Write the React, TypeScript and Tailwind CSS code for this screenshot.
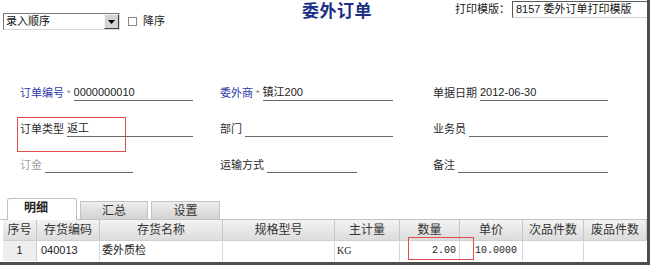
import React from 'react';

const FONT = "'Liberation Sans','Noto Sans CJK SC',sans-serif";

const cols = [
  { w: 34, label: '序号' },
  { w: 63, label: '存货编码' },
  { w: 123, label: '存货名称' },
  { w: 112, label: '规格型号' },
  { w: 65, label: '主计量' },
  { w: 60, label: '数量' },
  { w: 63, label: '单价' },
  { w: 61, label: '次品件数' },
  { w: 63, label: '废品件数' },
];

function Field({
  label,
  value,
  width,
  blue,
  muted,
  star,
}: {
  label: string;
  value?: string;
  width: number;
  blue?: boolean;
  muted?: boolean;
  star?: boolean;
}) {
  const labelColor = blue ? 'text-[#2d3aa6]' : muted ? 'text-[#a0a0a0]' : 'text-[#2a2a2a]';
  return (
    <div className="flex items-end h-[17px]" style={{ width }}>
      <span className={`text-[11px] leading-[16px] whitespace-nowrap ${labelColor}`}>{label}</span>
      {star && <span className="text-[9px] leading-[12px] text-[#777] ml-[3px] self-center">*</span>}
      <div className="flex-1 ml-[3px] h-[17px] border-b border-[#6a6a6a] text-[11px] leading-[16px] text-[#222] whitespace-nowrap overflow-hidden">
        {value}
      </div>
    </div>
  );
}

export default function App() {
  return (
    <div className="w-[652px] h-[267px] bg-white overflow-hidden" style={{ fontFamily: FONT }}>
      <div className="w-[650px] h-[265px] border-r-[3px] border-b-[3px] border-[#4e4e4e] flex flex-col">
        {/* top bar */}
        <div className="h-[32px] flex items-start">
          <div className="w-[299px] pl-[3px] pt-[13px] flex items-center">
            <div className="w-[117px] h-[17px] flex border border-t-[#7a7a7a] border-l-[#7a7a7a] border-r-[#d8d8d8] border-b-[#d8d8d8] bg-white">
              <span className="flex-1 text-[11px] leading-[15px] pl-[2px] text-[#111]">录入顺序</span>
              <div className="w-[15px] h-[15px] bg-[#d6d3ce] border border-t-[#f4f4f4] border-l-[#f4f4f4] border-r-[#404040] border-b-[#404040] flex items-center justify-center">
                <svg width="7" height="4" viewBox="0 0 7 4">
                  <path d="M0 0h7L3.5 4z" fill="#000" />
                </svg>
              </div>
            </div>
            <div className="ml-[8px] w-[9px] h-[9px] border border-[#8a8a8a] bg-white" />
            <span className="ml-[6px] text-[11px] leading-[15px] text-[#222]">降序</span>
          </div>
          <div className="w-[156px] pt-[1px] pl-[3px] text-[17px] leading-[22px] font-bold text-[#1c2f86] tracking-[0.5px]">
            委外订单
          </div>
          <span className="w-[57px] pt-[2px] text-[11px] leading-[14px] text-[#222] whitespace-nowrap">打印模版：</span>
          <div className="flex-1 mt-[1px] h-[17px] border border-t-[#5a5a5a] border-l-[#5a5a5a] border-r-0 border-b-[#d0d0d0] text-[11px] leading-[15px] pl-[3px] text-[#111] whitespace-nowrap">
            8157 委外订单打印模版
          </div>
        </div>

        {/* form */}
        <div className="mt-[52px] pl-[20px] flex flex-col">
          <div className="h-[36px] grid grid-cols-[200px_213px_1fr]">
            <Field label="订单编号" value="0000000010" width={173} blue star />
            <Field label="委外商" value="镇江200" width={173} blue star />
            <Field label="单据日期" value="2012-06-30" width={175} />
          </div>
          <div className="h-[36px] grid grid-cols-[200px_213px_1fr]">
            <div className="relative">
              <Field label="订单类型" value="返工" width={173} />
              <div className="absolute z-10 left-[-3px] top-[-3px] w-[109px] h-[35px] border border-[#e04c4c] pointer-events-none" />
            </div>
            <Field label="部门" width={173} />
            <Field label="业务员" width={175} />
          </div>
          <div className="h-[36px] grid grid-cols-[200px_213px_1fr]">
            <Field label="订金" width={113} muted />
            <Field label="运输方式" width={137} />
            <Field label="备注" width={175} />
          </div>
        </div>

        {/* tabs */}
        <div className="mt-[6px] h-[22px] flex items-end pl-[7px] gap-[3px] border-b border-[#c4c4c4]">
          <div className="w-[70px] h-[22px] bg-white border border-b-0 border-[#c0c0c0] rounded-t-[3px] text-[12px] leading-[18px] font-bold text-[#222] pl-[16px] translate-y-[1px]">
            明细
          </div>
          <div className="w-[68px] h-[18px] bg-gradient-to-b from-[#eeeeee] to-[#d2d2d2] border border-b-0 border-[#c2c2c2] text-[12px] leading-[18px] text-[#333] text-center">
            汇总
          </div>
          <div className="w-[69px] h-[18px] bg-gradient-to-b from-[#eeeeee] to-[#d2d2d2] border border-b-0 border-[#c2c2c2] text-[12px] leading-[18px] text-[#333] text-center">
            设置
          </div>
        </div>

        {/* table */}
        <div className="pl-[3px] flex flex-col">
          <div className="h-[21px] flex bg-gradient-to-b from-[#f3f3f3] to-[#dcdcdc] border-b border-[#cfcfcf]">
            {cols.map((c) => (
              <div
                key={c.label}
                className="h-full border-r border-[#c6c6c6] text-[12px] leading-[20px] text-[#333] text-center whitespace-nowrap"
                style={{ width: c.w }}
              >
                {c.label}
              </div>
            ))}
          </div>
          <div className="h-[20px] flex text-[11px] leading-[19px] text-[#222]">
            <div className="h-full bg-[#eeeeee] border-r border-[#d0d0d0] text-center" style={{ width: 34 }}>
              1
            </div>
            <div className="h-full border-r border-[#d8d8d8] pl-[4px]" style={{ width: 63 }}>
              040013
            </div>
            <div className="h-full border-r border-[#d8d8d8] pl-[2px]" style={{ width: 123 }}>
              委外质检
            </div>
            <div className="h-full border-r border-[#d8d8d8]" style={{ width: 112 }} />
            <div className="h-full border-r border-[#d8d8d8] pl-[2px] font-['Liberation_Serif'] text-[10px]" style={{ width: 65 }}>
              KG
            </div>
            <div className="relative h-full border-r border-[#d8d8d8] text-right pr-[3px] font-['Liberation_Mono'] text-[10px]" style={{ width: 60 }}>
              2.00
              <div className="absolute left-[8px] top-[-4px] w-[66px] h-[23px] border border-[#e04c4c] z-10" />
            </div>
            <div className="h-full border-r border-[#d8d8d8] text-right pr-[5px] font-['Liberation_Mono'] text-[10px]" style={{ width: 63 }}>
              10.0000
            </div>
            <div className="h-full border-r border-[#d8d8d8]" style={{ width: 61 }} />
            <div className="h-full" style={{ width: 63 }} />
          </div>
        </div>
      </div>
    </div>
  );
}
